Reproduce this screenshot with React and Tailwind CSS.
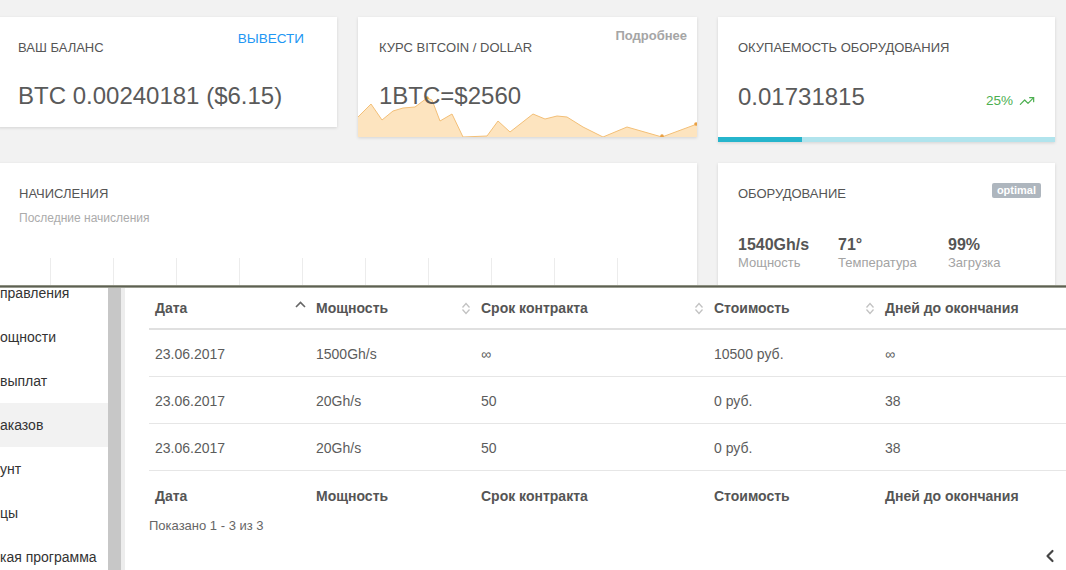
import React from 'react';
import { TrendingUp, ChevronLeft } from 'lucide-react';

// btc price sparkline, card-relative coords (339 x 40)
const btcPoints = [
  [0, 20], [13, 7], [24, 23], [35, 14], [45, 11], [57, 10], [69, 1], [74, 3],
  [82, 24], [94, 17], [105, 40], [129, 39], [140, 24], [152, 35], [175, 17],
  [187, 22], [199, 19], [209, 20], [225, 30], [245, 40], [269, 30], [304, 40], [339, 27],
];

const sideItems = [
  { label: 'правления' },
  { label: 'ощности' },
  { label: 'выплат' },
  { label: 'аказов', active: true },
  { label: 'унт' },
  { label: 'цы' },
  { label: 'кая программа' },
];

const rows = [
  ['23.06.2017', '1500Gh/s', '∞', '10500 руб.', '∞'],
  ['23.06.2017', '20Gh/s', '50', '0 руб.', '38'],
  ['23.06.2017', '20Gh/s', '50', '0 руб.', '38'],
];

const columns = ['Дата', 'Мощность', 'Срок контракта', 'Стоимость', 'Дней до окончания'];

function Card({ className = '', children }) {
  return (
    <div className={`relative bg-white shadow-[0_1px_3px_rgba(0,0,0,0.13)] ${className}`}>
      {children}
    </div>
  );
}

function CardTitle({ children }) {
  return <div className="text-[13px] leading-4 uppercase text-[#555]">{children}</div>;
}

function SortIcon() {
  return (
    <svg width="10" height="13" viewBox="0 0 10 13" fill="none" stroke="#c2c2c2" strokeWidth="1.3">
      <path d="M1.5 5.5 L5 1.5 L8.5 5.5" />
      <path d="M1.5 7.5 L5 11.5 L8.5 7.5" />
    </svg>
  );
}

function SortUp() {
  return (
    <svg width="11" height="7" viewBox="0 0 11 7" fill="none" stroke="#666" strokeWidth="1.6" className="mb-[8px]">
      <path d="M1 6 L5.5 1.5 L10 6" />
    </svg>
  );
}

function BtcChart() {
  const line = btcPoints.map(p => p.join(',')).join(' ');
  const area = `0,40 ${line} 339,40`;
  return (
    <svg className="absolute left-0 bottom-0" width="339" height="41" viewBox="0 -1 339 41">
      <polygon points={area} fill="#fde4bf" />
      <polyline points={line} fill="none" stroke="#f3bf77" strokeWidth="1" />
      <circle cx="69" cy="1" r="1.8" fill="#e9a043" />
      <circle cx="304" cy="39" r="1.8" fill="#e9a043" />
      <circle cx="338" cy="27" r="1.8" fill="#e9a043" />
    </svg>
  );
}

function GridLines() {
  const xs = [52, 115, 178, 241, 304, 367, 430, 493, 556, 619];
  return (
    <svg className="absolute left-0 top-[95px]" width="699" height="40">
      {xs.map(x => (
        <line key={x} x1={x + 0.5} y1="0" x2={x + 0.5} y2="40" stroke="#ececec" strokeWidth="1" />
      ))}
    </svg>
  );
}

export default function App() {
  return (
    <div className="w-[1066px] h-[570px] overflow-hidden bg-[#f2f2f2] font-['Liberation_Sans',Arial,sans-serif]">
      {/* dashboard */}
      <div className="h-[285px] overflow-hidden pt-[17px] ml-[-2px]">
        <div className="grid grid-cols-[339px_339px_337px] gap-x-[21px] gap-y-[21px] items-start">
          <Card className="h-[110px] px-[20px]">
            <div className="flex justify-between items-start">
              <div className="pt-[23px]"><CardTitle>Ваш баланс</CardTitle></div>
              <button className="mt-[14px] mr-[13px] text-[13.5px] leading-4 text-[#2196f3]">ВЫВЕСТИ</button>
            </div>
            <div className="mt-[26px] text-[24px] leading-7 text-[#5a5a5a]">BTC 0.00240181 ($6.15)</div>
          </Card>

          <Card className="h-[120px] overflow-hidden">
            <BtcChart />
            <div className="relative px-[21px]">
              <div className="flex justify-between items-start">
                <div className="pt-[23px]"><CardTitle>Курс Bitcoin / Dollar</CardTitle></div>
                <span className="mt-[11px] mr-[-11px] text-[13px] leading-4 font-bold text-[#a5a5a5]">Подробнее</span>
              </div>
              <div className="mt-[26px] text-[24px] leading-7 text-[#5a5a5a]">1BTC=$2560</div>
            </div>
          </Card>

          <Card className="h-[125px] flex flex-col">
            <div className="flex-1 px-[20px]">
              <div className="pt-[23px]"><CardTitle>Окупаемость оборудования</CardTitle></div>
              <div className="flex justify-between items-center mt-[26px]">
                <div className="text-[24px] leading-7 text-[#5a5a5a]">0.01731815</div>
                <div className="flex items-center gap-[6px] mt-[9px] text-[13.5px] text-[#4caf50]">
                  <span>25%</span>
                  <TrendingUp size={16} strokeWidth={1.8} />
                </div>
              </div>
            </div>
            <div className="flex h-[5px]">
              <div className="w-[84px] bg-[#26b5cc]" />
              <div className="flex-1 bg-[#b1e4ed]" />
            </div>
          </Card>

          <Card className="col-span-2 h-[160px] px-[21px]">
            <div className="pt-[23px]"><CardTitle>Начисления</CardTitle></div>
            <div className="mt-[8px] text-[12px] leading-4 text-[#ababab]">Последние начисления</div>
            <GridLines />
            <span className="absolute left-[22px] top-[119px] text-[11px] leading-4 text-[#666]">4000</span>
          </Card>

          <Card className="h-[160px] px-[20px]">
            <div className="pt-[23px]"><CardTitle>Оборудование</CardTitle></div>
            <span className="absolute top-[20px] right-[14px] h-[15px] px-[5px] rounded-[2px] bg-[#aeb6be] text-[11px] leading-[15px] font-bold text-white">optimal</span>
            <div className="grid grid-cols-[100px_110px_1fr] mt-[33px]">
              {[
                ['1540Gh/s', 'Мощность'],
                ['71°', 'Температура'],
                ['99%', 'Загрузка'],
              ].map(([v, l]) => (
                <div key={l}>
                  <div className="text-[16px] leading-5 font-bold text-[#555]">{v}</div>
                  <div className="text-[13px] leading-4 text-[#a3a3a3]">{l}</div>
                </div>
              ))}
            </div>
          </Card>
        </div>
      </div>

      {/* seam */}
      <div className="h-[3px] bg-[linear-gradient(#a4a697,#5d6053_50%,#b9bbaf)]" />

      {/* orders page */}
      <div className="flex h-[282px] overflow-hidden bg-white">
        <aside className="w-[108px] shrink-0 bg-white">
          <ul className="-mt-[17px]">
            {sideItems.map(item => (
              <li
                key={item.label}
                className={`h-[44px] flex items-center whitespace-nowrap text-[14px] text-[#333] ${item.active ? 'bg-[#f2f2f2]' : ''}`}
              >
                {item.label}
              </li>
            ))}
          </ul>
        </aside>
        <div className="w-[13px] shrink-0 bg-[#c7c7c7]" />
        <div className="w-[4px] shrink-0 bg-[#ededed]" />

        <main className="flex-1 pl-[24px] flex flex-col">
          <div className="grid grid-cols-[159px_165px_233px_171px_1fr] h-[42px] border-b-2 border-[#e0e0e0] text-[14px] font-bold text-[#555]">
            {columns.map((c, i) => (
              <div key={c} className={`flex justify-between items-center pt-[2px] pb-[2px] pr-[2px] ${i === 0 ? 'pl-[6px]' : 'pl-[8px]'}`}>
                <span className="leading-5 whitespace-nowrap">{c}</span>
                {i === 0 ? <SortUp /> : i < 4 ? <SortIcon /> : null}
              </div>
            ))}
          </div>

          {rows.map((r, ri) => (
            <div key={ri} className="grid grid-cols-[159px_165px_233px_171px_1fr] h-[47px] pt-[2px] items-center border-b border-[#e6e6e6] text-[14px] text-[#5c5c5c]">
              {r.map((cell, i) => (
                <div key={i} className={i === 0 ? 'pl-[6px]' : 'pl-[8px]'}>{cell}</div>
              ))}
            </div>
          ))}

          <div className="grid grid-cols-[159px_165px_233px_171px_1fr] h-[47px] pt-[3px] items-center text-[14px] font-bold text-[#555]">
            {columns.map((c, i) => (
              <div key={c} className={`whitespace-nowrap ${i === 0 ? 'pl-[6px]' : 'pl-[8px]'}`}>{c}</div>
            ))}
          </div>

          <div className="text-[13px] leading-4 text-[#666]">Показано 1 - 3 из 3</div>

          <div className="flex justify-end pr-[6px] mt-[12px]">
            <ChevronLeft size={20} strokeWidth={2.6} className="text-[#444]" />
          </div>
        </main>
      </div>
    </div>
  );
}
